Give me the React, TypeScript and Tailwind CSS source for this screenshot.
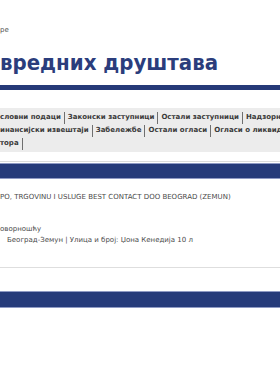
import React from "react";

const Sep = () => <span className="inline-block shrink-0 w-px h-[12px] bg-[#6f6f6f] mx-[3px]" />;

function TabRow({ items, last }: { items: string[]; last?: boolean }) {
  return (
    <div className="flex items-center h-[13px] whitespace-nowrap">
      {items.map((t, i) => (
        <React.Fragment key={i}>
          <span className="shrink-0">{t}</span>
          {(i < items.length - 1 || last) && <Sep />}
        </React.Fragment>
      ))}
    </div>
  );
}

export default function App() {
  return (
    <div className="w-[280px] h-[380px] overflow-hidden bg-white" style={{ fontFamily: '"DejaVu Sans", Verdana, sans-serif' }}>
      <div className="pt-[26px] h-[36px] text-[7px] leading-[8px] text-[#555]">ре</div>
      <div
        className="mt-[14px] text-[22px] leading-[26px] font-bold text-[#2b3d7c] whitespace-nowrap"
        style={{ fontFamily: '"DejaVu Sans Condensed", "DejaVu Sans", sans-serif', fontStretch: "condensed" }}
      >
        вредних друштава
      </div>
      <div className="mt-[9px] h-[5px] bg-[#263a78]" />
      <div className="mt-[18px] bg-[#ececec] pt-[3px] pb-[4px] h-[44px] text-[7px] font-bold text-[#3a3a3a] overflow-hidden">
        <TabRow items={["словни подаци", "Законски заступници", "Остали заступници", "Надзорни одбор"]} />
        <TabRow items={["инансијски извештаји", "Забележбе", "Остали огласи", "Огласи о ликвидацији"]} />
        <TabRow items={["тора"]} last />
      </div>
      <div className="mt-[9px] h-px bg-[#dcdcdc]" />
      <div className="mt-[1px] h-[16px] bg-[#263b7a] border-y border-[#8f9ac4]" />
      <div className="pt-[14px] text-[7px] leading-[9px] text-[#4a4a4a] whitespace-nowrap">
        <div>PO, TRGOVINU I USLUGE BEST CONTACT DOO BEOGRAD (ZEMUN)</div>
        <div className="mt-[23px]">оворношћу</div>
        <div className="mt-[2px] pl-[7px]">Београд-Земун | Улица и број: Џона Кенедија 10 л</div>
      </div>
      <div className="mt-[22px] h-px bg-[#dedede]" />
      <div className="mt-[23px] h-[17px] bg-[#263b7a] border-y border-[#8f9ac4]" />
    </div>
  );
}
